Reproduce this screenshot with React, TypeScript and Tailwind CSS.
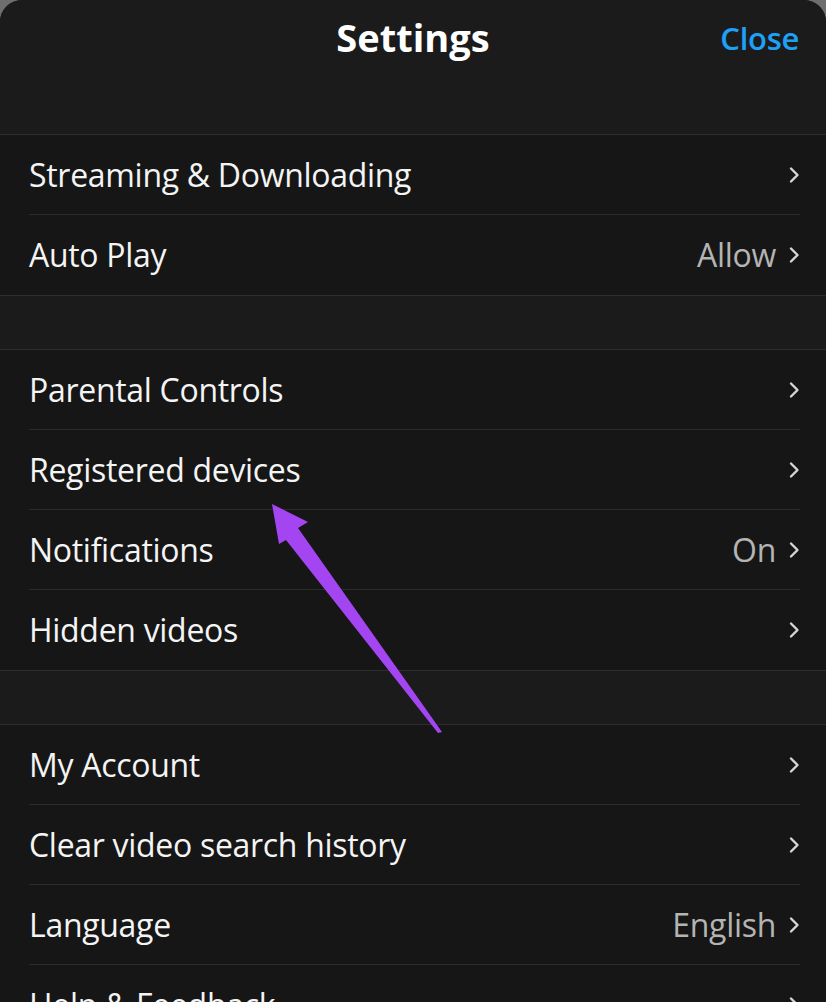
import React from "react";

type Row = { label: string; value?: string };

const groups: Row[][] = [
  [{ label: "Streaming & Downloading" }, { label: "Auto Play", value: "Allow" }],
  [
    { label: "Parental Controls" },
    { label: "Registered devices" },
    { label: "Notifications", value: "On" },
    { label: "Hidden videos" },
  ],
  [
    { label: "My Account" },
    { label: "Clear video search history" },
    { label: "Language", value: "English" },
    { label: "Help & Feedback" },
  ],
];

function Chevron() {
  return (
    <svg width="12" height="18" viewBox="0 0 12 18" className="shrink-0">
      <path d="M3 2.5 L9.5 9 L3 15.5" fill="none" stroke="#d6d6d6" strokeWidth="2.4" strokeLinecap="round" strokeLinejoin="round" />
    </svg>
  );
}

function SettingRow({ row, last }: { row: Row; last: boolean }) {
  return (
    <div className="pl-[29px] pr-[26px]">
      <div className={"h-[80px] flex items-center justify-between " + (last ? "" : "border-b border-[#2c2c2c]")}>
        <span className="text-[32px] text-[#f4f4f4] tracking-[-0.3px]">{row.label}</span>
        <div className="flex items-center gap-[12px]">
          {row.value && <span className="text-[32px] text-[#b4b4b4] tracking-[-0.3px]">{row.value}</span>}
          <Chevron />
        </div>
      </div>
    </div>
  );
}

export default function App() {
  return (
    <div className="w-[826px] h-[1002px] bg-[#6e6e6e] overflow-hidden" style={{ fontFamily: '"Open Sans", "Noto Sans", sans-serif' }}>
      <div className="relative w-full h-[1040px] bg-[#161616] rounded-[22px] overflow-hidden">
        <header className="h-[135px] bg-[#1b1b1b] border-b border-[#2e2e2e] relative">
          <div className="h-[74px] flex items-center justify-center">
            <h1 className="text-[38px] font-bold text-white tracking-[0px]">Settings</h1>
          </div>
          <button className="absolute right-[27px] top-[15px] text-[31px] font-semibold text-[#1ea0f5] tracking-[-0.3px]">Close</button>
        </header>

        {groups.map((g, gi) => (
          <div key={gi}>
            {gi > 0 && <div className="h-[55px] bg-[#1b1b1b] border-t border-b border-[#2e2e2e]" />}
            <div className="bg-[#161616]">
              {g.map((r, ri) => (
                <SettingRow key={r.label} row={r} last={ri === g.length - 1} />
              ))}
            </div>
          </div>
        ))}

        <svg className="absolute left-0 top-0 pointer-events-none" width="826" height="1002" viewBox="0 0 826 1002">
          <polygon points="272,504 308,522 298,528 442,732 438,733 286,540 279,544" fill="#a445f2" />
        </svg>
      </div>
    </div>
  );
}
